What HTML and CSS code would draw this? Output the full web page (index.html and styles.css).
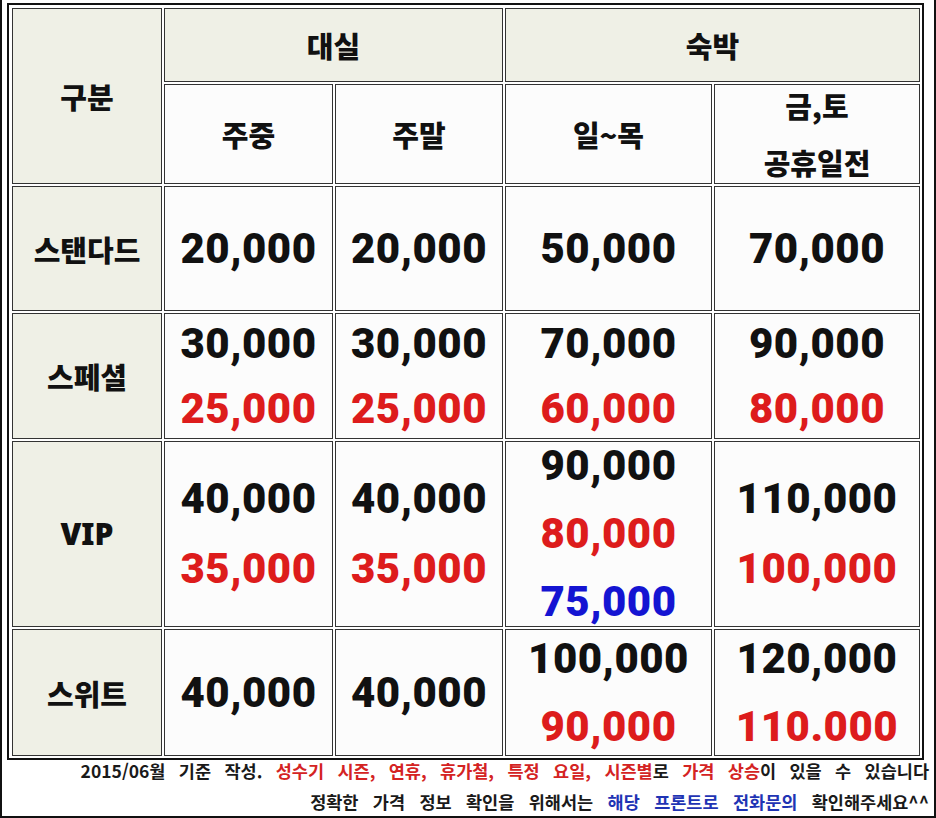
FILE: index.html
```html
<!DOCTYPE html>
<html lang="ko">
<head>
<meta charset="utf-8">
<title>객실 요금표</title>
<link rel="stylesheet" href="styles.css">
</head>
<body>
<div class="page">
  <div class="price-table">
    <div class="cell head ko rows2">구분</div>
    <div class="cell head ko cols2">대실</div>
    <div class="cell head ko cols2">숙박</div>

    <div class="cell sub ko">주중</div>
    <div class="cell sub ko">주말</div>
    <div class="cell sub ko">일~목</div>
    <div class="cell sub ko two"><div>금,토</div><div>공휴일전</div></div>

    <div class="cell side ko">스탠다드</div>
    <div class="cell num"><div>20,000</div></div>
    <div class="cell num"><div>20,000</div></div>
    <div class="cell num"><div>50,000</div></div>
    <div class="cell num"><div>70,000</div></div>

    <div class="cell side ko">스페셜</div>
    <div class="cell num tight"><div>30,000</div><div class="red">25,000</div></div>
    <div class="cell num tight"><div>30,000</div><div class="red">25,000</div></div>
    <div class="cell num tight"><div>70,000</div><div class="red">60,000</div></div>
    <div class="cell num tight"><div>90,000</div><div class="red">80,000</div></div>

    <div class="cell side ko vip">VIP</div>
    <div class="cell num wide"><div>40,000</div><div class="red">35,000</div></div>
    <div class="cell num wide"><div>40,000</div><div class="red">35,000</div></div>
    <div class="cell num"><div>90,000</div><div class="red">80,000</div><div class="blue">75,000</div></div>
    <div class="cell num wide"><div>110,000</div><div class="red">100,000</div></div>

    <div class="cell side ko">스위트</div>
    <div class="cell num"><div>40,000</div></div>
    <div class="cell num"><div>40,000</div></div>
    <div class="cell num"><div>100,000</div><div class="red">90,000</div></div>
    <div class="cell num"><div>120,000</div><div class="red">110.000</div></div>
  </div>
  <div class="notes">
    <p class="note">2015/06월 기준 작성. <span class="n-red">성수기 시즌, 연휴, 휴가철, 특정 요일, 시즌별</span>로 <span class="n-red">가격 상승</span>이 있을 수 있습니다</p>
    <p class="note second">정확한 가격 정보 확인을 위해서는 <span class="n-blue">해당 프론트로 전화문의</span> 확인해주세요^^</p>
  </div>
</div>
</body>
</html>
```
FILE: styles.css
```css
html, body {
  margin: 0;
  padding: 0;
  background: #ffffff;
}

.page {
  width: 936px;
  height: 818px;
  box-sizing: border-box;
  border: 2px solid #111111;
  border-top: 0;
  padding: 3px 0 0 5px;
  overflow: hidden;
}

.price-table {
  display: grid;
  width: max-content;
  grid-template-columns: 150px 169px 168px 207px 206px;
  grid-template-rows: 74px 100px 125px 126px 186px 127px;
  gap: 2px;
  padding: 3px 2px 2px 3px;
  border: 2px solid #111111;
  background: #ffffff;
}

.cell {
  box-sizing: border-box;
  border: 1px solid #333333;
  background: #fcfcfc;
  display: flex;
  flex-direction: column;
  align-items: center;
  justify-content: center;
  text-align: center;
  color: #111111;
  white-space: nowrap;
}

.ko {
  font-family: "Noto Sans CJK KR", "Noto Sans", sans-serif;
  font-weight: 900;
  font-size: 29px;
  line-height: 36px;
}

.head, .side {
  background: #eff0e6;
}

.rows2 {
  grid-row: span 2;
}

.cols2 {
  grid-column: span 2;
}

.two {
  line-height: 57px;
}

.vip {
  font-family: "Noto Sans", "Noto Sans CJK KR", sans-serif;
  font-size: 30px;
}

.num {
  font-family: Roboto, "Liberation Sans", sans-serif;
  font-weight: 900;
  font-size: 42px;
  line-height: 68px;
  letter-spacing: 0.5px;
}

.num.tight {
  line-height: 65px;
}

.num.wide {
  line-height: 70px;
}

.red {
  color: #dd1c1c;
}

.blue {
  color: #1414d2;
}

.notes {
  padding-right: 5px;
  text-align: right;
}

.note {
  margin: 0;
  font-family: "Noto Sans CJK KR", "Noto Sans", sans-serif;
  font-weight: 700;
  font-size: 17.5px;
  line-height: 22px;
  word-spacing: 8.5px;
  color: #1a1a1a;
  white-space: nowrap;
}

.note.second {
  margin-top: 9px;
  word-spacing: 9.5px;
}

.n-red {
  color: #d42323;
}

.n-blue {
  color: #1f34b4;
}
```
